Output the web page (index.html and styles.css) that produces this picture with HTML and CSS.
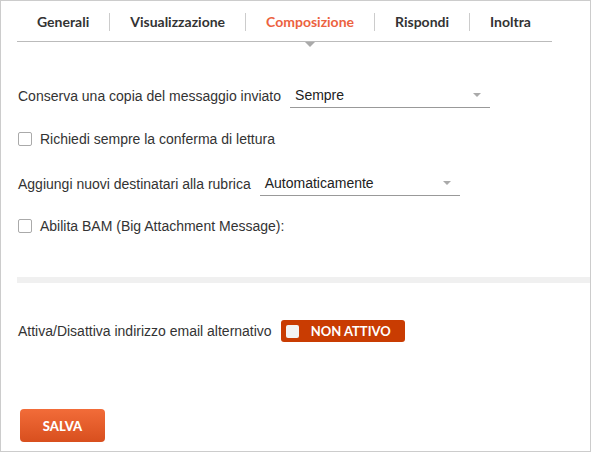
FILE: index.html
```html
<!DOCTYPE html>
<html lang="it">
<head>
  <meta charset="UTF-8" />
  <title>Impostazioni - Composizione</title>
  <link rel="stylesheet" href="styles.css">
</head>
<body>
  <div class="panel">
    <ul class="tabs">
      <li>Generali</li>
      <li>Visualizzazione</li>
      <li class="active">Composizione</li>
      <li>Rispondi</li>
      <li>Inoltra</li>
    </ul>

    <div class="form">
      <div class="row row-first">
        <span class="label">Conserva una copia del messaggio inviato</span>
        <div class="select select-wide">Sempre<span class="arrow"></span></div>
      </div>

      <label class="check-row check-first">
        <span class="checkbox"></span>
        Richiedi sempre la conferma di lettura
      </label>

      <div class="row row-second">
        <span class="label">Aggiungi nuovi destinatari alla rubrica</span>
        <div class="select">Automaticamente<span class="arrow"></span></div>
      </div>

      <label class="check-row check-second">
        <span class="checkbox"></span>
        Abilita BAM (Big Attachment Message):
      </label>
    </div>

    <div class="divider"></div>

    <div class="form">
      <div class="row row-toggle">
        <span class="label">Attiva/Disattiva indirizzo email alternativo</span>
        <div class="toggle">
          <span class="toggle-knob"></span>
          NON ATTIVO
        </div>
      </div>
    </div>

    <button class="save-button">SALVA</button>
  </div>
</body>
</html>
```

FILE: styles.css
```css
body {
  margin: 0;
  font-family: "Liberation Sans", Arial, sans-serif;
  color: #333;
  background-color: #fff;
}

.panel {
  width: 591px;
  height: 452px;
  box-sizing: border-box;
  border: 1px solid #ccc;
  padding-left: 16px;
}

/* tab bar */
.tabs {
  display: flex;
  width: 535px;
  height: 41px;
  box-sizing: border-box;
  margin: 0;
  padding: 12px 0 0 0;
  list-style: none;
  border-bottom: 1px solid #bbb;
  font-family: Lato, sans-serif;
  font-weight: bold;
  font-size: 14px;
}

.tabs li {
  position: relative;
  padding: 0 20px;
  line-height: 18px;
  height: 18px;
  color: #333;
}

.tabs li + li {
  border-left: 1px solid #ccc;
}

.tabs li.active {
  color: #ec6240;
}

.tabs li.active::after {
  content: "";
  position: absolute;
  left: 50%;
  top: 29px;
  margin-left: -5px;
  border-left: 5px solid transparent;
  border-right: 5px solid transparent;
  border-top: 5px solid #aaa;
}

/* form rows */
.form {
  padding-left: 1px;
  font-size: 14px;
}

.row {
  display: flex;
  align-items: center;
}

.label {
  margin-right: 9px;
  white-space: nowrap;
}

.row-first {
  margin-top: 41px;
}

.row-second {
  margin-top: 24px;
}

.select {
  position: relative;
  width: 195px;
  height: 24px;
  line-height: 24px;
  padding-left: 5px;
  border-bottom: 1px solid #999;
  color: #222;
}

.arrow {
  position: absolute;
  right: 9px;
  top: 10px;
  border-left: 4px solid transparent;
  border-right: 4px solid transparent;
  border-top: 4px solid #aaa;
}

.check-row {
  display: flex;
  align-items: center;
  height: 16px;
}

.check-first {
  margin-top: 23px;
}

.check-second {
  margin-top: 22px;
}

.checkbox {
  width: 12px;
  height: 12px;
  border: 1px solid #aaa;
  border-radius: 2px;
  margin-right: 8px;
  background-color: #fff;
}

.divider {
  height: 6px;
  background-color: #f0f0f0;
  margin-top: 43px;
}

.row-toggle {
  margin-top: 37px;
}

.toggle {
  display: flex;
  align-items: center;
  width: 124px;
  height: 22px;
  box-sizing: border-box;
  padding-left: 5px;
  border-radius: 3px;
  background-color: #c93c02;
  color: #fff;
  font-family: Lato, sans-serif;
  font-weight: bold;
  font-size: 13px;
}

.toggle-knob {
  width: 13px;
  height: 13px;
  border-radius: 2px;
  background-color: #f3f3f3;
  margin-right: 12px;
}

.save-button {
  display: block;
  margin: 67px 0 0 3px;
  width: 85px;
  height: 33px;
  border: none;
  border-radius: 4px;
  background: linear-gradient(#f26c39, #d84f1e);
  color: #fff;
  font-family: Lato, sans-serif;
  font-weight: 900;
  font-size: 13px;
  cursor: pointer;
}
```
